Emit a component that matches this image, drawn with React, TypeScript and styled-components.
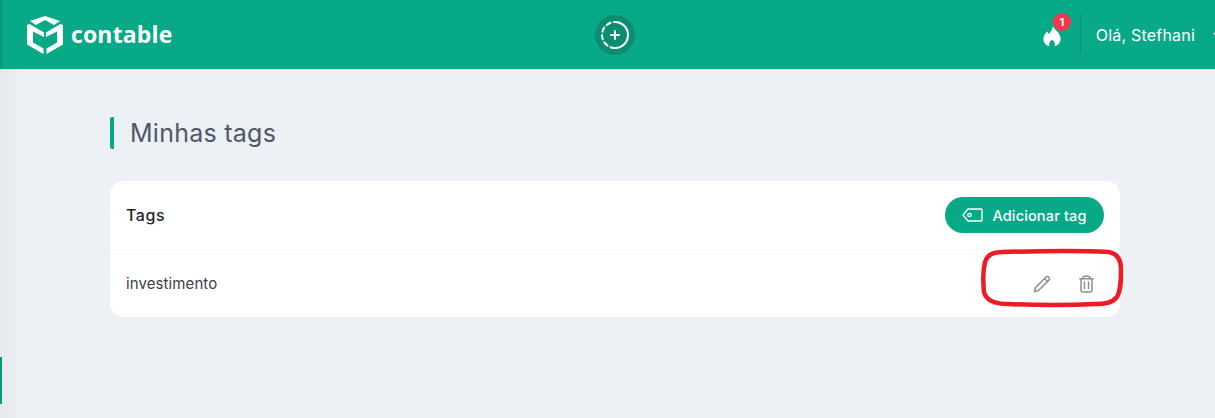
import React from "react";
import styled, {createGlobalStyle} from "styled-components";

const GREEN = '#07a987';

const GlobalStyle = createGlobalStyle`
  html, body {
    margin: 0;
    padding: 0;
    height: 418px;
    overflow: hidden;
    background: #edf0f5;
    font-family: "Inter", "Liberation Sans", sans-serif;
  }
`;

const Page = styled.div`
  position: relative;
  width: 1215px;
  height: 418px;
  overflow: hidden;
  background: #edf0f5;
`;

const TopBar = styled.header`
  height: 69px;
  background: ${GREEN};
  border-left: 2px solid #069a7b;
  box-sizing: border-box;
  display: grid;
  grid-template-columns: 1fr auto 1fr;
  align-items: center;
  padding-left: 25px;
  color: #fff;
`;

const Brand = styled.div`
  display: flex;
  align-items: center;
  gap: 8px;
`;

const BrandName = styled.span`
  font-family: "Open Sans", sans-serif;
  font-weight: 700;
  font-size: 23px;
  letter-spacing: 0.15px;
  margin-top: -1px;
`;

const QuickAdd = styled.button`
  width: 40px;
  height: 40px;
  padding: 0;
  margin-left: -12px;
  border: 0;
  border-radius: 50%;
  background: #0b8d72;
  display: flex;
  align-items: center;
  justify-content: center;
`;

const UserArea = styled.div`
  display: flex;
  align-items: center;
  justify-content: flex-end;
  margin-right: -8px;
`;

const Streak = styled.div`
  position: relative;
  width: 38px;
  display: flex;
  justify-content: center;
  margin-top: 2px;
`;

const Badge = styled.span`
  position: absolute;
  top: -13px;
  left: 20px;
  width: 18px;
  height: 18px;
  border-radius: 50%;
  background: #f5364a;
  font-size: 11px;
  font-weight: 700;
  line-height: 18px;
  text-align: center;
`;

const Divider = styled.span`
  width: 1px;
  height: 40px;
  margin: 0 15px 0 9px;
  background: #079478;
`;

const Greeting = styled.span`
  font-size: 16px;
  font-weight: 400;
  letter-spacing: 0.2px;
  white-space: nowrap;
`;

const Chevron = styled.svg`
  margin-left: 18px;
  flex: none;
`;

const Main = styled.main`
  padding: 48px 95px 0 110px;
`;

const Heading = styled.h1`
  margin: 0 0 32px;
  height: 32px;
  border-left: 4px solid ${GREEN};
  border-radius: 2px;
  padding-left: 16px;
  font-size: 25px;
  font-weight: 400;
  line-height: 32px;
  letter-spacing: 0.25px;
  color: #4f5867;
`;

const Card = styled.section`
  background: #fff;
  border-radius: 14px;
  overflow: hidden;
`;

const CardHeader = styled.div`
  height: 69px;
  box-sizing: border-box;
  padding: 0 16px;
  border-bottom: 1px solid #f3f4f6;
  display: flex;
  align-items: center;
  justify-content: space-between;
`;

const CardTitle = styled.h2`
  margin: 0;
  font-size: 16px;
  font-weight: 500;
  letter-spacing: 0.6px;
  color: #23272e;
`;

const AddButton = styled.button`
  width: 159px;
  height: 36px;
  padding: 0;
  border: 0;
  border-radius: 18px;
  background: ${GREEN};
  color: #fff;
  font-family: inherit;
  font-size: 14.5px;
  font-weight: 500;
  letter-spacing: 0.15px;
  display: flex;
  align-items: center;
  justify-content: center;
  gap: 9px;
`;

const TagRow = styled.div`
  height: 67px;
  box-sizing: border-box;
  padding: 0 16px;
  display: flex;
  align-items: center;
  justify-content: space-between;
`;

const TagName = styled.span`
  font-size: 15px;
  letter-spacing: 0.1px;
  color: #3a3f47;
`;

const Actions = styled.div`
  display: flex;
  align-items: center;
  gap: 24px;
  margin-right: 8px;
`;

const IconButton = styled.button`
  width: 20px;
  height: 20px;
  padding: 0;
  border: 0;
  background: none;
  display: flex;
  align-items: center;
  justify-content: center;
`;

const SideMarker = styled.span`
  position: absolute;
  left: 0;
  top: 357px;
  width: 2px;
  height: 47px;
  background: #069a7b;
`;

const SideShade = styled.span`
  position: absolute;
  left: 0;
  top: 69px;
  bottom: 0;
  width: 22px;
  background: linear-gradient(90deg, #e6e9ee, #edf0f5);
`;

const Annotation = styled.svg`
  position: absolute;
  left: 980px;
  top: 248px;
`;

function Logo() {
  return (
    <svg width="36" height="38" viewBox="0 0 36 38" fill="#fff">
      <path d="M18 0 L33 5 L27 9 L18 4 L9 9 L3 5 Z"/>
      <path d="M0 9 L2.500 8 L17 16.500 L17 21 L6 15.500 L6 26.500 L16.500 32.500 L16.500 38 L0 28.500 Z"/>
      <path d="M36 9 L33.500 8 L19 16.500 L19 21 L30 15.500 L30 26.500 L19.500 32.500 L19.500 38 L36 28.500 Z"/>
    </svg>
  );
}

export default function App() {
  return (
    <Page>
      <GlobalStyle/>
      <SideShade/>
      <SideMarker/>
      <TopBar>
        <Brand>
          <Logo/>
          <BrandName>contable</BrandName>
        </Brand>
        <QuickAdd aria-label="Adicionar">
          <svg width="30" height="30" viewBox="0 0 30 30" fill="none" stroke="#fff" strokeWidth="2" strokeLinecap="round">
            <path d="M15 2 A13 13 0 0 1 15 28" />
            <path d="M15 28 A13 13 0 0 1 2 15 A13 13 0 0 1 15 2" strokeDasharray="4.500 3.400"/>
            <path d="M15 11 V19 M11 15 H19"/>
          </svg>
        </QuickAdd>
        <UserArea>
          <Streak>
            <svg width="18" height="20" viewBox="0 0 18 20" fill="#fff">
              <path d="M10 0 C11 4 17 6 17.500 12 C18 17 14 20 11.500 20 C12.500 18 12 16 9 13.500 C6 16 5.500 18 6.500 20 C3.500 20 0 17 0.500 12 C0.800 9 3 7 4 5.500 L6 8 C7.500 6 9.500 3.500 10 0 Z"/>
            </svg>
            <Badge>1</Badge>
          </Streak>
          <Divider/>
          <Greeting>Olá, Stefhani</Greeting>
          <Chevron width="10" height="6" viewBox="0 0 10 6" fill="none" stroke="#fff" strokeWidth="1.600">
            <path d="M1 1 L5 5 L9 1"/>
          </Chevron>
        </UserArea>
      </TopBar>
      <Main>
        <Heading>Minhas tags</Heading>
        <Card>
          <CardHeader>
            <CardTitle>Tags</CardTitle>
            <AddButton>
              <svg width="21" height="14" viewBox="0 0 21 14" fill="none" stroke="#fff" strokeWidth="1.300" strokeLinejoin="round">
                <path d="M6 1 H19 A1 1 0 0 1 20 2 V12 A1 1 0 0 1 19 13 H6 L1 7 Z"/>
                <circle cx="7.500" cy="7" r="1.700"/>
              </svg>
              Adicionar tag
            </AddButton>
          </CardHeader>
          <TagRow>
            <TagName>investimento</TagName>
            <Actions>
              <IconButton aria-label="Editar">
                <svg width="18" height="18" viewBox="0 0 18 18" fill="none" stroke="#8b9097" strokeWidth="1.600" strokeLinejoin="round">
                  <path d="M1.500 16.500 L2.500 12.500 L12.800 2.200 A1.800 1.800 0 0 1 15.600 2.200 L15.800 2.400 A1.800 1.800 0 0 1 15.800 5.200 L5.500 15.500 Z"/>
                  <path d="M11.500 3.500 L14.500 6.500"/>
                </svg>
              </IconButton>
              <IconButton aria-label="Excluir">
                <svg width="15" height="18" viewBox="0 0 15 18" fill="none" stroke="#8b9097" strokeWidth="1.500" strokeLinecap="round">
                  <path d="M0.800 3.800 H14.200"/>
                  <path d="M3.500 3.500 C4 1.500 5.500 1 7.500 1 C9.500 1 11 1.500 11.500 3.500"/>
                  <path d="M2 4 V15 A2 2 0 0 0 4 17 H11 A2 2 0 0 0 13 15 V4"/>
                  <path d="M5.500 7 V13.500 M9.500 7 V13.500"/>
                </svg>
              </IconButton>
            </Actions>
          </TagRow>
        </Card>
      </Main>
      <Annotation width="146" height="64" viewBox="0 0 146 64" fill="none" stroke="#ed1c24" strokeWidth="4.500">
        <path d="M22 4 C60 3 110 3 128 4 C138 5 141 12 141 22 C141 32 141 42 137 49 C132 55 125 56 115 56 C80 58 50 57 28 56 C14 56 6 52 4 44 C3 34 3 22 5 14 C7 7 13 4 22 4 Z"/>
      </Annotation>
    </Page>
  );
}
